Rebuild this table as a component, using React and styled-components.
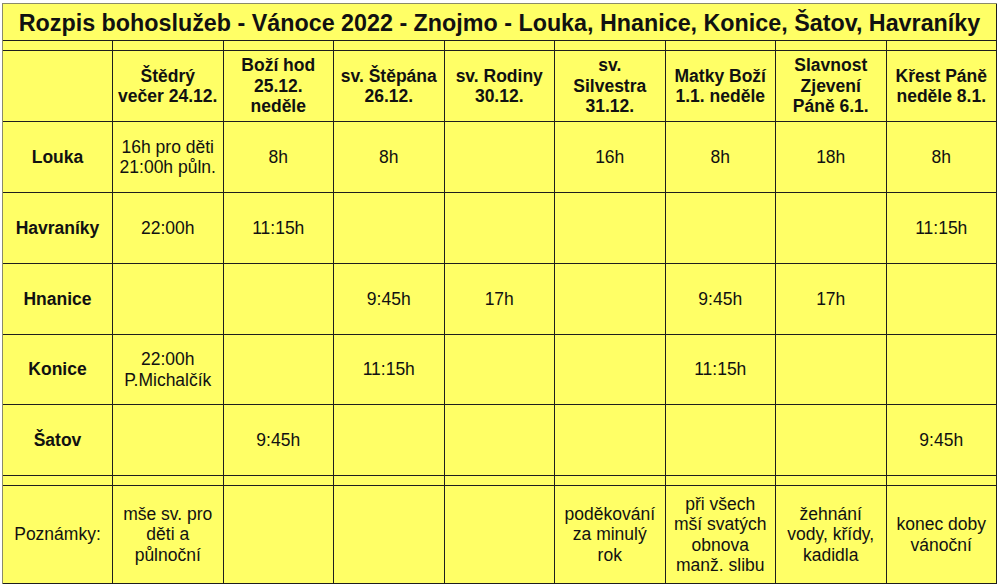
import React from "react";
import styled, { createGlobalStyle } from "styled-components";

const Global = createGlobalStyle`
  html, body {
    margin: 0;
    padding: 0;
    background: #fff;
  }
  body {
    font-family: "Liberation Sans", Arial, sans-serif;
    color: #111;
  }
`;

const Page = styled.div`
  padding: 3px 0 0 2px;
`;

const Sheet = styled.div`
  display: grid;
  width: 994px;
  grid-template-columns: 110px repeat(8, 1fr);
  grid-template-rows: 37px 10px 71px 71px 71px 71px 70px 71px 10px 98px;
  background: #ffff66;
  border-top: 1px solid #8a8a6a;
  border-left: 1px solid #8a8a6a;
`;

const Cell = styled.div`
  box-sizing: border-box;
  border-right: 1px solid #1e1e1e;
  border-bottom: 1px solid #1e1e1e;
  display: flex;
  align-items: center;
  justify-content: center;
  text-align: center;
  white-space: pre-line;
  font-size: 17.5px;
  line-height: 20.5px;
  font-weight: ${(p) => (p.$bold ? 700 : 400)};
`;

const Title = styled(Cell)`
  grid-column: 1 / -1;
  font-size: 23.3px;
  font-weight: 700;
  line-height: 26px;
  padding-top: 1px;
`;

const columns = [
  "Štědrý\nvečer 24.12.",
  "Boží hod\n25.12.\nneděle",
  "sv. Štěpána\n26.12.",
  "sv. Rodiny\n30.12.",
  "sv.\nSilvestra\n31.12.",
  "Matky Boží\n1.1. neděle",
  "Slavnost\nZjevení\nPáně 6.1.",
  "Křest Páně\nneděle 8.1.",
];

const rows = [
  ["Louka", ["16h pro děti\n21:00h půln.", "8h", "8h", "", "16h", "8h", "18h", "8h"]],
  ["Havraníky", ["22:00h", "11:15h", "", "", "", "", "", "11:15h"]],
  ["Hnanice", ["", "", "9:45h", "17h", "", "9:45h", "17h", ""]],
  ["Konice", ["22:00h\nP.Michalčík", "", "11:15h", "", "", "11:15h", "", ""]],
  ["Šatov", ["", "9:45h", "", "", "", "", "", "9:45h"]],
];

const notes = [
  "mše sv. pro\nděti a\npůlnoční",
  "",
  "",
  "",
  "poděkování\nza minulý\nrok",
  "při všech\nmší svatých\nobnova\nmanž. slibu",
  "žehnání\nvody, křídy,\nkadidla",
  "konec doby\nvánoční",
];

const blanks = Array.from({ length: 9 });

export default function App() {
  return (
    <Page>
      <Global />
      <Sheet>
        <Title>
          Rozpis bohoslužeb - Vánoce 2022 - Znojmo - Louka, Hnanice, Konice, Šatov, Havraníky
        </Title>

        {blanks.map((_, i) => (
          <Cell key={"s1" + i} />
        ))}

        <Cell />
        {columns.map((c) => (
          <Cell key={c} $bold>
            {c}
          </Cell>
        ))}

        {rows.map(([name, vals]) => (
          <React.Fragment key={name}>
            <Cell $bold>{name}</Cell>
            {vals.map((v, i) => (
              <Cell key={i}>{v}</Cell>
            ))}
          </React.Fragment>
        ))}

        {blanks.map((_, i) => (
          <Cell key={"s2" + i} />
        ))}

        <Cell>Poznámky:</Cell>
        {notes.map((n, i) => (
          <Cell key={"n" + i}>{n}</Cell>
        ))}
      </Sheet>
    </Page>
  );
}
